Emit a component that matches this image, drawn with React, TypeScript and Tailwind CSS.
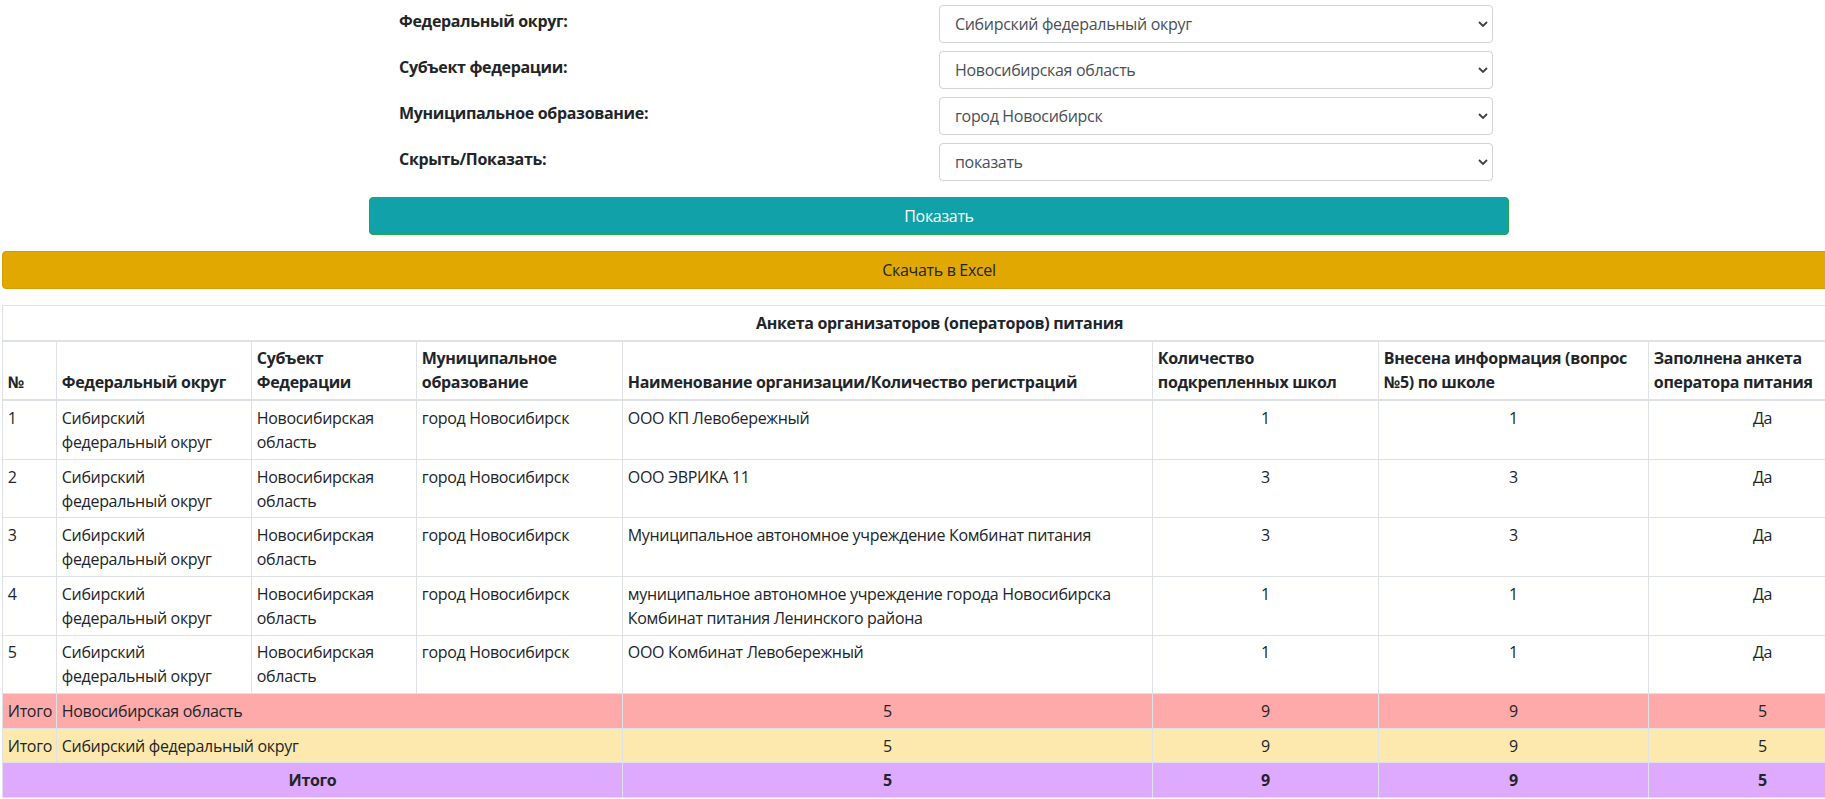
import React from 'react';

const filters = [
  { label: 'Федеральный округ:', value: 'Сибирский федеральный округ' },
  { label: 'Субъект федерации:', value: 'Новосибирская область' },
  { label: 'Муниципальное образование:', value: 'город Новосибирск' },
  { label: 'Скрыть/Показать:', value: 'показать' },
];

const rows = [
  { n: 1, org: ['ООО КП Левобережный'], schools: 1, info: 1 },
  { n: 2, org: ['ООО ЭВРИКА 11'], schools: 3, info: 3 },
  { n: 3, org: ['Муниципальное автономное учреждение Комбинат питания'], schools: 3, info: 3 },
  {
    n: 4,
    org: ['муниципальное автономное учреждение города Новосибирска', 'Комбинат питания Ленинского района'],
    schools: 1,
    info: 1,
  },
  { n: 5, org: ['ООО Комбинат Левобережный'], schools: 1, info: 1 },
];

const cell = 'border border-[#dee2e6] p-[0.3rem] align-top';
const head = 'border border-[#dee2e6] border-b-2 p-[0.3rem] align-bottom text-left font-bold whitespace-nowrap';

function Filter({ label, value }: { label: string; value: string }) {
  return (
    <div className="flex items-start h-[38px] mb-[8px]">
      <div className="w-[570px] pl-[30px] pt-[4px] font-bold">{label}</div>
      <div className="relative w-[554px]">
        <select
          defaultValue={value}
          className="w-full h-[38px] appearance-none bg-white border border-[#ced4da] rounded-[4px] pl-[15px] pr-7 text-[#495057] outline-none"
        >
          <option>{value}</option>
        </select>
        <svg
          className="absolute right-[5px] top-[16px] w-[10px] h-[6px] pointer-events-none"
          viewBox="0 0 10 6"
          fill="none"
          stroke="#3d4147"
          strokeWidth="1.8"
        >
          <path d="M1 1l4 4 4-4" />
        </svg>
      </div>
    </div>
  );
}

export default function App() {
  return (
    <div className="w-screen h-screen overflow-hidden bg-white font-['Open_Sans',sans-serif] text-[16px] leading-6 tracking-[-0.02em] text-[#212529]">
      <div className="w-[1878px] px-[2px]">
        <div className="w-[1140px] mx-auto pt-[5px]">
          {filters.map(f => (
            <Filter key={f.label} label={f.label} value={f.value} />
          ))}
          <button className="mt-[8px] w-full h-[38px] bg-[#10a2a8] border border-[#28a745] rounded-[4px] text-white">
            Показать
          </button>
        </div>

        <button className="mt-4 w-full h-[38px] bg-[#e0a800] border border-[#d39e00] rounded-[4px] text-[#212529]">
          Скачать в Excel
        </button>

        <table className="mt-4 w-[1874px] table-fixed border-collapse border border-[#dee2e6]">
          <colgroup>
            <col className="w-[54px]" />
            <col className="w-[195px]" />
            <col className="w-[165px]" />
            <col className="w-[206px]" />
            <col className="w-[530px]" />
            <col className="w-[226px]" />
            <col className="w-[270px]" />
            <col className="w-[228px]" />
          </colgroup>
          <thead>
            <tr>
              <th colSpan={8} className={head + ' !text-center'}>
                Анкета организаторов (операторов) питания
              </th>
            </tr>
            <tr>
              <th className={head}>№</th>
              <th className={head}>Федеральный округ</th>
              <th className={head}>
                Субъект
                <br />
                Федерации
              </th>
              <th className={head}>
                Муниципальное
                <br />
                образование
              </th>
              <th className={head}>Наименование организации/Количество регистраций</th>
              <th className={head}>
                Количество
                <br />
                подкрепленных школ
              </th>
              <th className={head}>
                Внесена информация (вопрос
                <br />
                №5) по школе
              </th>
              <th className={head}>
                Заполнена анкета
                <br />
                оператора питания
              </th>
            </tr>
          </thead>
          <tbody>
            {rows.map(r => (
              <tr key={r.n}>
                <td className={cell}>{r.n}</td>
                <td className={cell}>
                  Сибирский
                  <br />
                  федеральный округ
                </td>
                <td className={cell}>
                  Новосибирская
                  <br />
                  область
                </td>
                <td className={cell}>город Новосибирск</td>
                <td className={cell + ' whitespace-nowrap'}>
                  {r.org.map((line, i) => (
                    <div key={i}>{line}</div>
                  ))}
                  {r.org.length === 1 && <div>&nbsp;</div>}
                </td>
                <td className={cell + ' text-center'}>{r.schools}</td>
                <td className={cell + ' text-center'}>{r.info}</td>
                <td className={cell + ' text-center'}>Да</td>
              </tr>
            ))}
            <tr className="bg-[#feaaab]">
              <td className={cell + ' whitespace-nowrap'}>Итого</td>
              <td colSpan={3} className={cell}>Новосибирская область</td>
              <td className={cell + ' text-center'}>5</td>
              <td className={cell + ' text-center'}>9</td>
              <td className={cell + ' text-center'}>9</td>
              <td className={cell + ' text-center'}>5</td>
            </tr>
            <tr className="bg-[#fde9ae]">
              <td className={cell + ' whitespace-nowrap'}>Итого</td>
              <td colSpan={3} className={cell}>Сибирский федеральный округ</td>
              <td className={cell + ' text-center'}>5</td>
              <td className={cell + ' text-center'}>9</td>
              <td className={cell + ' text-center'}>9</td>
              <td className={cell + ' text-center'}>5</td>
            </tr>
            <tr className="bg-[#ddaaff] font-bold">
              <td colSpan={4} className={cell + ' text-center'}>Итого</td>
              <td className={cell + ' text-center'}>5</td>
              <td className={cell + ' text-center'}>9</td>
              <td className={cell + ' text-center'}>9</td>
              <td className={cell + ' text-center'}>5</td>
            </tr>
          </tbody>
        </table>
      </div>
    </div>
  );
}
